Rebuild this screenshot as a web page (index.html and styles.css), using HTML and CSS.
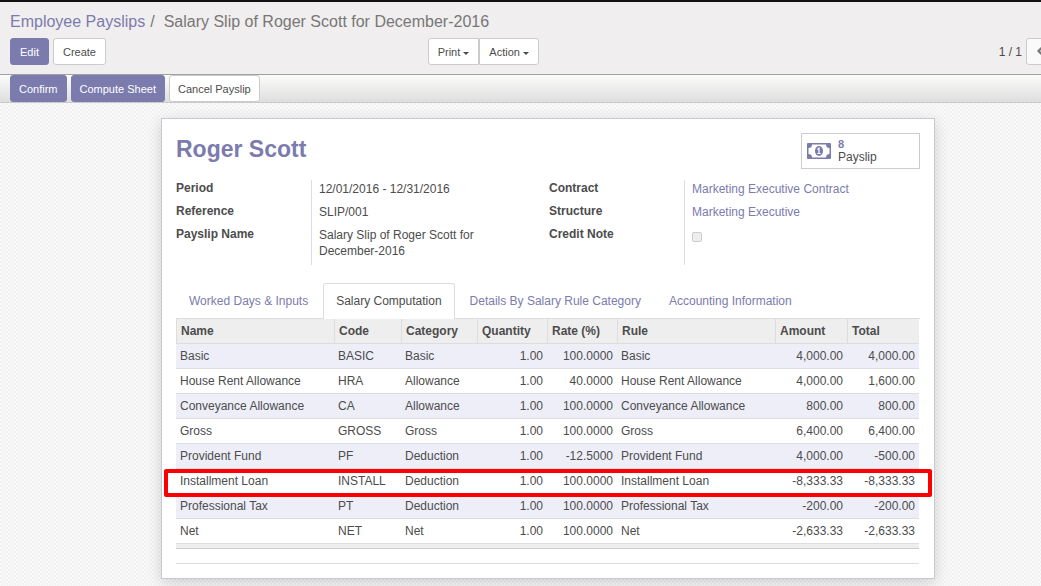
FILE: index.html
```html
<!DOCTYPE html>
<html lang="en">
<head>
<meta charset="utf-8">
<title>Salary Slip of Roger Scott for December-2016</title>
<link rel="stylesheet" href="styles.css">
</head>
<body>
<div class="app">
  <header class="control-panel">
    <nav class="breadcrumb" aria-label="Breadcrumb">
      <a href="#">Employee Payslips</a><span class="slash">/</span><span>Salary Slip of Roger Scott for December-2016</span>
    </nav>
    <div class="toolbar">
      <div class="toolbar-left">
        <div class="actions">
          <button class="btn btn-primary" type="button">Edit</button>
          <button class="btn" type="button">Create</button>
        </div>
        <div class="btn-group">
          <button class="btn" type="button">Print <span class="caret"></span></button>
          <button class="btn" type="button">Action <span class="caret"></span></button>
        </div>
      </div>
      <div class="pager">
        <span>1 / 1</span>
        <div class="btn-group">
          <button class="btn btn-pager" type="button" aria-label="Previous"><svg width="8" height="10" viewBox="0 0 8 10"><path d="M6.500 1 2.500 5l4 4" fill="none" stroke="#777" stroke-width="2.200"/></svg></button>
          <button class="btn btn-pager" type="button" aria-label="Next"><svg width="8" height="10" viewBox="0 0 8 10"><path d="M1.500 1l4 4-4 4" fill="none" stroke="#777" stroke-width="2.200"/></svg></button>
        </div>
      </div>
    </div>
  </header>
  <div class="statusbar">
    <button class="btn btn-primary" type="button">Confirm</button>
    <button class="btn btn-primary" type="button">Compute Sheet</button>
    <button class="btn" type="button">Cancel Payslip</button>
  </div>
  <main class="form-view">
    <section class="sheet">
      <div class="sheet-head">
        <h1>Roger Scott</h1>
        <button class="stat" type="button">
          <svg class="money" width="24" height="16" viewBox="0 0 24 16" aria-hidden="true">
            <path fill-rule="evenodd" d="M1 0h22q1 0 1 1v14q0 1-1 1H1q-1 0-1-1V1q0-1 1-1zM5 1.500A3.500 3.500 0 0 1 1.500 5v6A3.500 3.500 0 0 1 5 14.500h14A3.500 3.500 0 0 1 22.500 11V5A3.500 3.500 0 0 1 19 1.500z"/>
            <ellipse cx="12" cy="8" rx="4" ry="5"/>
            <path d="M10.500 6.500 12 5.200V10.500M10.300 10.500h3.400" fill="none" stroke="#fff" stroke-width="1.200"/>
          </svg>
          <span class="stat-text"><strong>8</strong><span>Payslip</span></span>
        </button>
      </div>
      <div class="groups">
        <dl class="group">
          <dt>Period</dt><dd>12/01/2016 - 12/31/2016</dd>
          <dt>Reference</dt><dd>SLIP/001</dd>
          <dt>Payslip Name</dt><dd>Salary Slip of Roger Scott for December-2016</dd>
        </dl>
        <dl class="group">
          <dt>Contract</dt><dd><a href="#">Marketing Executive Contract</a></dd>
          <dt>Structure</dt><dd><a href="#">Marketing Executive</a></dd>
          <dt><label for="credit">Credit Note</label></dt><dd><input id="credit" class="check" type="checkbox" disabled></dd>
        </dl>
      </div>
      <nav class="tabs">
        <a href="#">Worked Days &amp; Inputs</a>
        <a href="#" class="active" aria-current="page">Salary Computation</a>
        <a href="#">Details By Salary Rule Category</a>
        <a href="#">Accounting Information</a>
      </nav>
      <div class="list">
        <table class="lines">
          <colgroup><col><col class="c-code"><col class="c-cat"><col class="c-qty"><col class="c-qty"><col><col class="c-amt"><col class="c-amt"></colgroup>
          <thead><tr><th>Name</th><th>Code</th><th>Category</th><th>Quantity</th><th>Rate (%)</th><th>Rule</th><th>Amount</th><th>Total</th></tr></thead>
          <tbody>
            <tr><td>Basic</td><td>BASIC</td><td>Basic</td><td class="num">1.00</td><td class="num">100.0000</td><td>Basic</td><td class="num">4,000.00</td><td class="num">4,000.00</td></tr>
            <tr><td>House Rent Allowance</td><td>HRA</td><td>Allowance</td><td class="num">1.00</td><td class="num">40.0000</td><td>House Rent Allowance</td><td class="num">4,000.00</td><td class="num">1,600.00</td></tr>
            <tr><td>Conveyance Allowance</td><td>CA</td><td>Allowance</td><td class="num">1.00</td><td class="num">100.0000</td><td>Conveyance Allowance</td><td class="num">800.00</td><td class="num">800.00</td></tr>
            <tr><td>Gross</td><td>GROSS</td><td>Gross</td><td class="num">1.00</td><td class="num">100.0000</td><td>Gross</td><td class="num">6,400.00</td><td class="num">6,400.00</td></tr>
            <tr><td>Provident Fund</td><td>PF</td><td>Deduction</td><td class="num">1.00</td><td class="num">-12.5000</td><td>Provident Fund</td><td class="num">4,000.00</td><td class="num">-500.00</td></tr>
            <tr class="marked"><td>Installment Loan<span class="mark"></span></td><td>INSTALL</td><td>Deduction</td><td class="num">1.00</td><td class="num">100.0000</td><td>Installment Loan</td><td class="num">-8,333.33</td><td class="num">-8,333.33</td></tr>
            <tr><td>Professional Tax</td><td>PT</td><td>Deduction</td><td class="num">1.00</td><td class="num">100.0000</td><td>Professional Tax</td><td class="num">-200.00</td><td class="num">-200.00</td></tr>
            <tr><td>Net</td><td>NET</td><td>Net</td><td class="num">1.00</td><td class="num">100.0000</td><td>Net</td><td class="num">-2,633.33</td><td class="num">-2,633.33</td></tr>
          </tbody>
        </table>
        <div class="lines-foot"></div>
        <hr class="rule">
      </div>
    </section>
  </main>
</div>
</body>
</html>
```
FILE: styles.css
```css
* { box-sizing: border-box; }
html { overflow: hidden; }
body {
  margin: 0;
  font-family: "Liberation Sans", Arial, sans-serif;
  font-size: 12px;
  line-height: 16px;
  color: #4c4c4c;
  overflow: hidden;
}
a { color: #7c7bad; text-decoration: none; }
.app {
  width: calc(100% + 55px);
  min-height: 100vh;
  display: flex;
  flex-direction: column;
  border-top: 2px solid #111;
}
.control-panel {
  background: #f0eeee;
  border-bottom: 1px solid #a0a0a0;
  padding: 8px 10px 9px;
}
.breadcrumb {
  font-size: 16px;
  line-height: 24px;
  color: #777;
}
.breadcrumb .slash { margin: 0 9px 0 5px; }
.toolbar { display: grid; grid-template-columns: 1fr 1fr; margin-top: 4px; }
.toolbar-left { display: flex; justify-content: space-between; padding-right: 9px; }
.actions { display: flex; gap: 4px; }
.btn {
  font: 11px/15px "Liberation Sans", Arial, sans-serif;
  color: #4c4c4c;
  background: #fff;
  border: 1px solid #ccc;
  border-radius: 3px;
  padding: 6px 9px 4px;
  height: 27px;
  white-space: nowrap;
}
.btn-primary { background: #7c7bad; border-color: #7c7bad; color: #fff; }
.btn-group { display: flex; }
.btn-group .btn:first-child { border-radius: 3px 0 0 3px; }
.btn-group .btn:last-child { border-radius: 0 3px 3px 0; }
.caret {
  display: inline-block;
  vertical-align: middle;
  border: 3px solid transparent;
  border-top-color: #4c4c4c;
  border-bottom: 0;
}
.pager { display: flex; justify-content: flex-end; align-items: center; gap: 4px; padding-right: 4px; }
.btn-pager { width: 28px; background: #fafafa; }
.statusbar {
  display: flex;
  gap: 4px;
  height: 28px;
  padding: 0 10px;
  background: linear-gradient(#fcfcfb, #dedede);
  border-bottom: 1px solid #cacaca;
}
.statusbar .btn { padding: 6px 8px 4px; }
.form-view {
  flex: 1;
  padding: 15px 16px 16px;
  background: repeating-conic-gradient(#f1f1f1 0 25%, #fafafa 0 50%) 0 0 / 4px 4px;
}
.sheet {
  max-width: 774px;
  margin: 0 auto;
  padding: 14px;
  background: #fff;
  border: 1px solid #c8c8d3;
  box-shadow: 0 4px 14px rgba(0, 0, 0, 0.16);
}
.sheet-head { display: flex; justify-content: space-between; align-items: flex-start; }
h1 { margin: 0; font-size: 23px; line-height: 32px; color: #7c7bad; }
.stat {
  display: flex;
  align-items: center;
  gap: 7px;
  width: 119px;
  height: 36px;
  padding: 0 5px;
  border: 1px solid #ccc;
  background: #fff;
  color: #4c4c4c;
  font: 12px/13px "Liberation Sans", Arial, sans-serif;
  text-align: left;
}
.money { fill: #7c7bad; }
.stat-text { display: flex; flex-direction: column; }
.stat strong { color: #7c7bad; font-size: 11px; }
.groups { display: grid; grid-template-columns: 1fr 1fr; gap: 2px; margin-top: 11px; }
.group {
  display: grid;
  grid-template-columns: 135px 1fr;
  grid-template-rows: 23px 23px 39px;
  margin: 0;
}
dt { font-weight: bold; }
dd { margin: 0; border-left: 1px solid #ddd; padding: 1px 24px 0 7px; }
.check {
  appearance: none;
  display: block;
  width: 10px;
  height: 10px;
  margin: 5px 0 0;
  border: 1px solid #ccc;
  border-radius: 2px;
  background: #eee;
}
.tabs { display: flex; gap: 2px; margin-top: 18px; border-bottom: 1px solid #ddd; }
.tabs a {
  padding: 9px 12px;
  border: 1px solid transparent;
  border-bottom: 0;
  border-radius: 3px 3px 0 0;
  white-space: nowrap;
}
.tabs .active { color: #4c4c4c; border-color: #ddd; background: #fff; margin-bottom: -1px; }
.list { padding-right: 1px; }
.lines { width: 100%; table-layout: fixed; border-collapse: separate; border-spacing: 0; }
.c-code { width: 67px; }
.c-cat { width: 76px; }
.c-qty { width: 70px; }
.c-amt { width: 72px; }
.lines th, .lines td { height: 25px; padding: 0 4px; border-bottom: 1px solid #ddd; text-align: left; white-space: nowrap; }
.lines th { background: #eee; border-left: 1px solid #ddd; }
.lines tbody tr:nth-child(odd) { background: #eeeef8; }
.lines .num { text-align: right; }
.marked { position: relative; }
.mark {
  position: absolute;
  inset: 0 -13px -3px -12px;
  border: 4px solid #f00;
  border-radius: 2px;
  pointer-events: none;
}
.lines-foot { height: 5px; background: #eee; border-bottom: 1px solid #ccc; }
.rule { margin: 14px 0 0; border: 0; border-top: 1px solid #ddd; }
```
